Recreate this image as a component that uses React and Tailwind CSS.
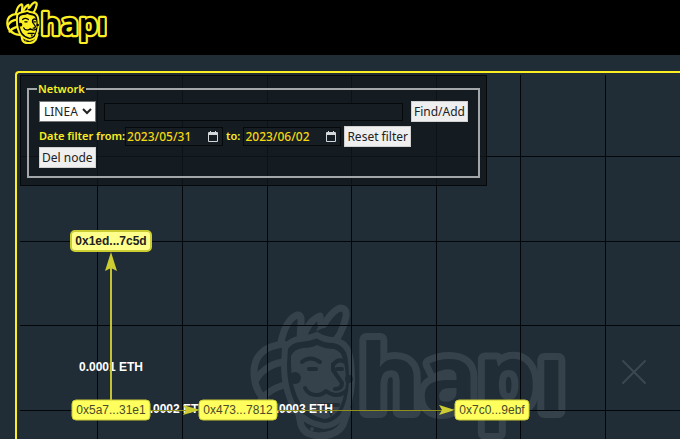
import { useState } from "react";
import clsx from "clsx";

const columns = [77, 162, 247, 331, 416, 500, 585];
const rows = [81, 166, 250, 335];

const nodes = [
  { id: "0x1ed...7c5d", x: 91, y: 166, width: 80, selected: true },
  { id: "0x5a7...31e1", x: 91, y: 335, width: 78 },
  { id: "0x473...7812", x: 218, y: 335, width: 78 },
  { id: "0x7c0...9ebf", x: 472, y: 335, width: 74 },
];

const amounts = [
  { text: "0.0001 ETH", x: 91, y: 296 },
  { text: "0.0002 ETH", x: 155, y: 338 },
  { text: "0.0003 ETH", x: 281, y: 338 },
];

// ink is the lines and the lit areas, paper is what lies behind them
function Logo({ ink, paper, ...props }) {
  return (
    <svg viewBox="0 0 316 136" {...props}>
      {/* headdress */}
      <g fill={paper} stroke={ink} strokeWidth="7" strokeLinecap="round" strokeLinejoin="round">
        <path d="M34 40C14 42 4 52 4 68C4 86 12 102 42 106" />
        <path d="M33 58C20 60 10 68 6 76M34 81C24 84 16 89 11 96" fill="none" />
        <path d="M31 38C34 24 40 14 47 11Q52 10 51 20L50 34" />
        <path d="M53 34C56 24 62 15 70 12L72 28" />
        <path d="M70 27C76 16 82 7 90 4Q97 4 96 12Q94 24 86 36" />
        <path d="M48 106L51 121Q54 131 69 132Q86 132 93 121L98 106" />
      </g>
      <path d="M62 33Q66 24 84 22L88 26Q84 34 78 35Z" fill={paper} />
      {/* mask */}
      <path
        d="M35 44Q40 36 50 35Q60 34 67 31Q74 36 84 36Q95 38 99 48Q102 56 102 78Q101 98 93 112Q84 122 74 122Q58 120 46 107Q34 88 34 60Z"
        fill={paper}
        stroke={ink}
        strokeWidth="6"
        strokeLinejoin="round"
      />
      <path
        d="M41 52Q44 45 53 44Q62 44 67 41Q75 45 84 45Q91 47 93 55Q96 64 96 80Q94 98 87 108Q80 115 74 115Q60 112 51 100Q41 84 41 60Z"
        fill={ink}
      />
      <g fill="none" stroke={paper} strokeWidth="4" strokeLinecap="round" strokeLinejoin="round">
        <path d="M52 58Q60 51 70 58M84 60Q88 54 95 58" />
        <path d="M59 65H66M87 65H92" />
        <path d="M83 60V66L92 79Q92 85 85 85" />
        <path d="M55 84Q58 91 67 91Q72 91 76 87Q81 91 86 91Q92 91 96 87" />
        <path d="M69 101H88" />
      </g>
      <path d="M77 105H84L81 113Z" fill={paper} />
      <circle cx="45" cy="74" r="6" fill={paper} />
      <circle cx="99" cy="75" r="4" fill={paper} />
      <circle cx="62" cy="125" r="2" fill={ink} />
      <text
        x="109"
        y="107"
        className="font-['Open_Sans'] text-[94px] font-bold"
        fill={paper}
        stroke={ink}
        strokeWidth="14"
        strokeLinejoin="round"
        paintOrder="stroke"
      >
        hapı
      </text>
    </svg>
  );
}

function Graph() {
  return (
    <svg className="absolute inset-0 h-full w-full font-['Liberation_Sans',sans-serif] text-[12px]">
      <Logo x="230" y="229" width="316" height="136" ink="#36424b" paper="#202d36" />
      <path d="M603 286L625 308M625 286L603 308" stroke="#3c4851" strokeWidth="2" strokeLinecap="round" />

      <g stroke="#03070a" strokeWidth="1" shapeRendering="crispEdges">
        {columns.map((x) => (
          <line key={x} x1={x} x2={x} y1="0" y2="100%" />
        ))}
        {rows.map((y) => (
          <line key={y} x1="0" x2="100%" y1={y} y2={y} />
        ))}
      </g>

      <g fill="#ffffff" textAnchor="middle" className="font-bold">
        {amounts.map((a) => (
          <text key={a.text} x={a.x} y={a.y}>{a.text}</text>
        ))}
      </g>

      {/* transfers */}
      <g shapeRendering="crispEdges">
        <line x1="91" y1="190" x2="91" y2="326" stroke="#c2c233" strokeWidth="2" />
        <line x1="130" y1="335" x2="166" y2="335" stroke="#8f8f1c" strokeWidth="1" />
        <line x1="257" y1="335" x2="422" y2="335" stroke="#8f8f1c" strokeWidth="1" />
      </g>
      <g fill="#cccc33">
        <path d="M91 177L97 196L91 193L85 196Z" />
        <path d="M180 335L163 330L166 335L163 340Z" />
        <path d="M435 335L419 330L422 335L419 340Z" />
      </g>

      {nodes.map((n) => (
        <g key={n.id}>
          <rect
            x={n.x - n.width / 2}
            y={n.y - 10}
            width={n.width}
            height="20"
            rx="4"
            fill={n.selected ? "#ffff8c" : "#ffff5e"}
            stroke="#cccc33"
            strokeWidth={n.selected ? 2 : 1}
          />
          <text
            x={n.x}
            y={n.y + 4}
            textAnchor="middle"
            fill={n.selected ? "#222222" : "#4a4a2c"}
            className={clsx(n.selected && "font-bold")}
          >
            {n.id}
          </text>
        </g>
      ))}
    </svg>
  );
}

function Button({ children, ...props }) {
  return (
    <button
      type="button"
      className="h-[21px] border border-[#d0d0d0] bg-[#efefef] px-0.5 text-[12px] leading-4 font-normal whitespace-nowrap text-[#222]"
      {...props}
    >
      {children}
    </button>
  );
}

function DateField({ id, value, onChange }) {
  return (
    <span className="flex h-[19px] w-[98px] items-center border border-[#05090c] bg-[#161e24] pr-1">
      <input
        id={id}
        type="text"
        value={value}
        onChange={(e) => onChange(e.target.value)}
        className="w-full min-w-0 pl-px text-[12px] font-medium text-[#f5d90f] outline-none"
      />
      <button type="button" aria-label="Open calendar" className="shrink-0">
        <svg viewBox="0 0 10 11" className="h-[11px] w-[10px]" fill="#d5d8da">
          <path d="M2 0H3V1H7V0H8V1H9Q10 1 10 2V10Q10 11 9 11H1Q0 11 0 10V2Q0 1 1 1H2ZM1 4V10H9V4Z" />
        </svg>
      </button>
    </span>
  );
}

export default function App() {
  const [network, setNetwork] = useState("LINEA");
  const [address, setAddress] = useState("");
  const [from, setFrom] = useState("2023/05/31");
  const [to, setTo] = useState("2023/06/02");

  function resetFilter() {
    setFrom("");
    setTo("");
  }

  return (
    <div className="flex h-screen flex-col overflow-hidden bg-[#202d36] font-['Noto_Sans','Open_Sans',sans-serif] text-[12px]">
      <header className="h-[55px] shrink-0 bg-black px-1.5 py-px">
        <a href="/" aria-label="hapi" className="block w-[101px]">
          <Logo ink="#fbee23" paper="#000000" className="w-full" />
        </a>
      </header>

      <main className="mt-4 ml-[15px] flex-1 rounded-tl border-t-2 border-l-2 border-[#fbee23] pt-0.5 pl-[3px]">
        <div className="relative h-full">
          <Graph />

          <form className="absolute top-0 left-0 w-[467px] border border-[#05090c] bg-[#11171b]/75 px-1.5 pt-[5px] pb-[7px]">
            <fieldset className="border-2 border-[#a4a7a9] px-2.5 pb-2 text-[11px] font-semibold text-[#fbee23]">
              <legend className="-ml-0.5 px-px leading-4">Network</legend>
              <div className="mt-1 flex items-center gap-2">
                <select
                  aria-label="Network"
                  value={network}
                  onChange={(e) => setNetwork(e.target.value)}
                  className="h-[21px] w-[57px] border border-[#767676] bg-white text-[12px] font-normal text-[#222]"
                >
                  <option>LINEA</option>
                </select>
                <input
                  type="text"
                  aria-label="Address"
                  value={address}
                  onChange={(e) => setAddress(e.target.value)}
                  className="h-[18px] min-w-0 flex-1 border border-[#05090c] bg-[#161e24] px-0.5 text-[12px] outline-none"
                />
                <Button>Find/Add</Button>
              </div>
              <div className="mt-1 flex items-center gap-[3px]">
                <span className="flex items-center">
                  <label htmlFor="from">Date filter from:</label>
                  <DateField id="from" value={from} onChange={setFrom} />
                </span>
                <label htmlFor="to">to:</label>
                <DateField id="to" value={to} onChange={setTo} />
                <Button onClick={resetFilter}>Reset filter</Button>
              </div>
              <div className="flex">
                <Button>Del node</Button>
              </div>
            </fieldset>
          </form>
        </div>
      </main>
    </div>
  );
}
